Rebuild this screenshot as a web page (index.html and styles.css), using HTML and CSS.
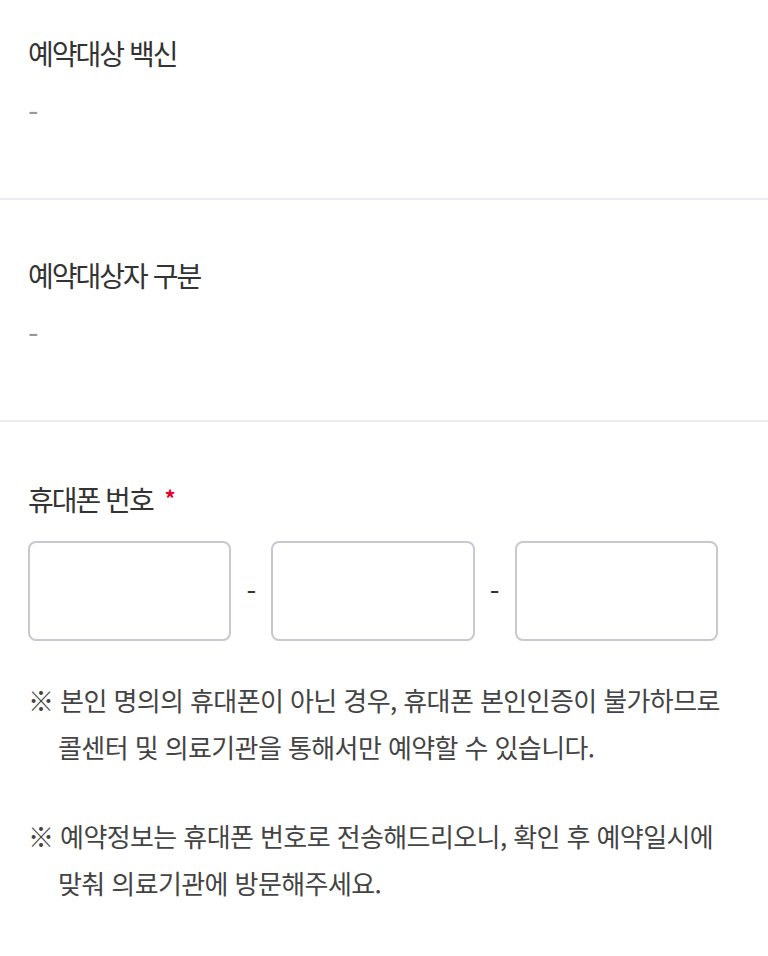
FILE: index.html
```html
<!DOCTYPE html>
<html lang="ko">
<head>
    <meta charset="UTF-8">
    <meta name="viewport" content="width=device-width, initial-scale=1.0">
    <title>예약 정보 입력</title>
    <link rel="stylesheet" href="styles.css">
</head>
<body>
    <div class="form">
        <div class="section first">
            <h2 class="label">예약대상 백신</h2>
            <p class="value">-</p>
        </div>

        <div class="section">
            <h2 class="label">예약대상자 구분</h2>
            <p class="value">-</p>
        </div>

        <div class="section last">
            <h2 class="label">휴대폰 번호 <span class="required">*</span></h2>
            <div class="phone">
                <input class="phone-input" type="tel" maxlength="3">
                <span class="phone-dash">-</span>
                <input class="phone-input" type="tel" maxlength="4">
                <span class="phone-dash">-</span>
                <input class="phone-input" type="tel" maxlength="4">
            </div>

            <p class="note">※ 본인 명의의 휴대폰이 아닌 경우, 휴대폰 본인인증이 불가하므로 콜센터 및 의료기관을 통해서만 예약할 수 있습니다.</p>
            <p class="note">※ 예약정보는 휴대폰 번호로 전송해드리오니, 확인 후 예약일시에 맞춰 의료기관에 방문해주세요.</p>
        </div>
    </div>
</body>
</html>
```

FILE: styles.css
```css
body {
    margin: 0;
    background: #fff;
    font-family: "Noto Sans CJK KR", "Noto Sans", sans-serif;
    color: #333;
}
.form {
    width: 768px;
}
.section {
    padding: 57px 28px 0;
    height: 222px;
    box-sizing: border-box;
    border-bottom: 2px solid #ebebf3;
}
.section.first {
    padding-top: 35px;
    height: 200px;
}
.section.last {
    border-bottom: none;
    height: auto;
}
.label {
    margin: 0;
    font-size: 28px;
    font-weight: 400;
    line-height: 36px;
    letter-spacing: -2px;
    color: #333;
}
.required {
    color: #e4002b;
    font-size: 22px;
    font-weight: 700;
    vertical-align: 4px;
    letter-spacing: 0;
    margin-left: 6px;
}
.value {
    margin: 22px 0 0;
    font-size: 30px;
    line-height: 36px;
    color: #999;
}
.phone {
    display: flex;
    align-items: center;
    margin-top: 24px;
    width: 690px;
}
.phone-input {
    flex: 1;
    width: 0;
    min-width: 0;
    height: 100px;
    box-sizing: border-box;
    border: 2px solid #c8c8d0;
    border-radius: 8px;
    padding: 0 16px;
    font-size: 26px;
    font-family: inherit;
    outline: none;
}
.phone-dash {
    flex: none;
    width: 40px;
    text-align: center;
    font-size: 28px;
    color: #333;
}
.note {
    margin: 35px 0 0;
    padding-left: 30px;
    text-indent: -30px;
    font-size: 26px;
    line-height: 47px;
    letter-spacing: -0.6px;
    word-break: keep-all;
    color: #444;
    width: 690px;
}
.note + .note {
    margin-top: 42px;
}
```
